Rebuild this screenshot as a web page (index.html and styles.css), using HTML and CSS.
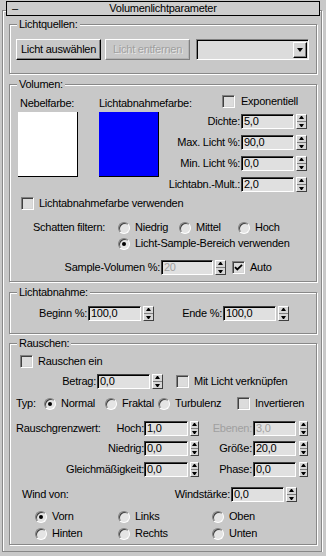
FILE: index.html
```html
<!DOCTYPE html>
<html>
<head>
<meta charset="utf-8">
<link rel="stylesheet" href="styles.css">
</head>
<body>
<div class="panel">
  <div class="title"><span class="minus">–</span><span class="title-text">Volumenlichtparameter</span><span></span></div>

  <div class="group g-quellen">
    <span class="legend">Lichtquellen:</span>
    <div class="btn-row">
      <div class="btn">Licht auswählen</div>
      <div class="btn disabled">Licht entfernen</div>
      <div class="combo"><div class="combo-btn"><span class="tri-down"></span></div></div>
    </div>
  </div>

  <div class="group g-vol">
    <span class="legend">Volumen:</span>
    <div class="vol-top">
      <div class="col1">
        <div class="cap">Nebelfarbe:</div>
        <div class="swatch white"></div>
      </div>
      <div class="col2">
        <div class="cap">Lichtabnahmefarbe:</div>
        <div class="swatch blue"></div>
      </div>
      <div class="col3">
        <div class="chk exp"><span class="cb"></span><span>Exponentiell</span></div>
        <div class="param"><span class="lbl">Dichte:</span><span class="fld">5,0</span><span class="spin"></span></div>
        <div class="param"><span class="lbl">Max. Licht %:</span><span class="fld">90,0</span><span class="spin"></span></div>
        <div class="param"><span class="lbl">Min. Licht %:</span><span class="fld">0,0</span><span class="spin"></span></div>
        <div class="param"><span class="lbl">Lichtabn.-Mult.:</span><span class="fld">2,0</span><span class="spin"></span></div>
      </div>
    </div>
    <div class="chk lfv"><span class="cb"></span><span>Lichtabnahmefarbe verwenden</span></div>
    <div class="radio-row rr1">
      <span class="rlabel">Schatten filtern:</span>
      <span class="ropt w61"><span class="rb"></span>Niedrig</span>
      <span class="ropt w59"><span class="rb"></span>Mittel</span>
      <span class="ropt"><span class="rb"></span>Hoch</span>
    </div>
    <div class="radio-row rr2">
      <span class="ropt"><span class="rb on"></span>Licht-Sample-Bereich verwenden</span>
    </div>
    <div class="frow sv-row">
      <span class="lbl w-sv">Sample-Volumen %:</span><span class="fld w52 dis">20</span><span class="spin"></span>
      <span class="chk auto"><span class="cb"><svg width="9" height="9" viewBox="0 0 9 9"><path d="M1 4.2 L3.3 6.5 L8 1.8" stroke="#000" stroke-width="1.8" fill="none"/></svg></span><span>Auto</span></span>
    </div>
  </div>

  <div class="group g-abn">
    <span class="legend">Lichtabnahme:</span>
    <div class="frow la-row">
      <span class="lbl w-beg">Beginn %:</span><span class="fld">100,0</span><span class="spin"></span>
      <span class="lbl w-end">Ende %:</span><span class="fld">100,0</span><span class="spin"></span>
    </div>
  </div>

  <div class="group g-rau">
    <span class="legend">Rauschen:</span>
    <div class="chk rein"><span class="cb"></span><span>Rauschen ein</span></div>
    <div class="frow bet-row">
      <span class="lbl w-bet">Betrag:</span><span class="fld">0,0</span><span class="spin"></span>
      <span class="chk mlv"><span class="cb"></span><span>Mit Licht verknüpfen</span></span>
    </div>
    <div class="radio-row typ-row">
      <span class="rlabel w-typ">Typ:</span>
      <span class="ropt w-norm"><span class="rb on"></span>Normal</span>
      <span class="ropt w-frak"><span class="rb"></span>Fraktal</span>
      <span class="ropt w-turb"><span class="rb"></span>Turbulenz</span>
      <span class="chk"><span class="cb"></span><span>Invertieren</span></span>
    </div>
    <div class="frow nz-row nz1">
      <span class="nz-left"><span>Rauschgrenzwert:</span><span>Hoch:</span></span>
      <span class="fld w44">1,0</span><span class="spin narrow"></span>
      <span class="lbl w-r dis">Ebenen:</span><span class="fld w43 dis">3,0</span><span class="spin narrow r"></span>
    </div>
    <div class="frow nz-row nz2">
      <span class="nz-left right"><span>Niedrig:</span></span>
      <span class="fld w44">0,0</span><span class="spin narrow"></span>
      <span class="lbl w-r">Größe:</span><span class="fld w43">20,0</span><span class="spin narrow r"></span>
    </div>
    <div class="frow nz-row nz3">
      <span class="nz-left right"><span>Gleichmäßigkeit:</span></span>
      <span class="fld w44">0,0</span><span class="spin narrow"></span>
      <span class="lbl w-r">Phase:</span><span class="fld w43">0,0</span><span class="spin narrow r"></span>
    </div>
    <div class="frow wind-row">
      <span class="wind-l">Wind von:</span>
      <span class="lbl w-ws">Windstärke:</span><span class="fld">0,0</span><span class="spin"></span>
    </div>
    <div class="radio-row wr1">
      <span class="ropt w-c1"><span class="rb on"></span>Vorn</span>
      <span class="ropt w-c2"><span class="rb"></span>Links</span>
      <span class="ropt"><span class="rb"></span>Oben</span>
    </div>
    <div class="radio-row wr2">
      <span class="ropt w-c1"><span class="rb"></span>Hinten</span>
      <span class="ropt w-c2"><span class="rb"></span>Rechts</span>
      <span class="ropt"><span class="rb"></span>Unten</span>
    </div>
  </div>
</div>
</body>
</html>
```
FILE: styles.css
```css
* { box-sizing: border-box; }

body {
  margin: 0;
  background: #c8c8c8;
  font-family: "Liberation Sans", Arial, sans-serif;
  font-size: 11px;
  line-height: 13px;
  letter-spacing: -0.25px;
  color: #000;
}

.panel {
  margin: 10px 0 0 2px;
  width: 320px;
  height: 542px;
  border: 1px solid #888;
  box-shadow: inset 1px 1px #fff, 1px 1px #fff;
}

.title {
  display: grid;
  grid-template-columns: 1fr auto 1fr;
  align-items: center;
  width: 314px;
  height: 15px;
  margin: -10px 0 0 3px;
  border: 1px solid #000;
  background: #cdcdcd;
}
.minus { padding-left: 5px; }

.group {
  position: relative;
  margin: 10px 0 0 6px;
  width: 308px;
  border: 1px solid #888;
  box-shadow: inset 1px 1px #fff, 1px 1px #fff;
}
.legend {
  position: absolute;
  top: -7px;
  left: 7px;
  padding: 0 2px;
  background: #c8c8c8;
  line-height: 13px;
}
.g-quellen { margin-top: 8px; height: 50px; }
.g-vol { height: 198px; }
.g-abn { height: 42px; }
.g-rau { margin-top: 9px; height: 202px; }

/* buttons */
.btn-row { display: flex; margin: 14px 0 0 6px; }
.btn {
  width: 85px;
  height: 21px;
  display: flex;
  align-items: center;
  justify-content: center;
  border: 1px solid;
  border-color: #fff #000 #000 #fff;
  box-shadow: inset -1px -1px #808080;
  margin-right: 4px;
}
.btn.disabled {
  color: #a0a0a0;
  text-shadow: 1px 1px 0 #e6e6e6;
  border-color: #fff #808080 #808080 #fff;
  box-shadow: inset -1px -1px #b4b4b4;
}
.combo {
  width: 113px;
  height: 21px;
  margin-left: 2px;
  display: flex;
  justify-content: flex-end;
  padding: 2px 1px 1px 2px;
  border: 1px solid;
  border-color: #808080 #fff #fff #808080;
  box-shadow: inset 1px 1px #000;
  background: #dcdcdc;
}
.combo-btn {
  width: 14px;
  display: flex;
  align-items: center;
  justify-content: center;
  border: 1px solid;
  border-color: #fff #000 #000 #fff;
  box-shadow: inset -1px -1px #808080;
  background: #d6d6d6;
}
.tri-down {
  width: 1px;
  height: 0;
  border-left: 3px solid transparent;
  border-right: 3px solid transparent;
  border-top: 4px solid #000;
}

/* volume top */
.vol-top { display: flex; }
.col1 { margin-left: 8px; width: 60px; }
.col2 { margin-left: 21px; width: 60px; white-space: nowrap; }
.col3 { flex: 1; padding-right: 9px; }
.cap { margin: 12px 0 0 2px; height: 13px; }
.col2 .cap { margin-left: 0; }
.swatch {
  margin-top: 2px;
  width: 60px;
  height: 65px;
  border-right: 1px solid #000;
  border-bottom: 1px solid #000;
}
.swatch.white { background: #fff; }
.swatch.blue { background: #0000ff; }

.chk { display: flex; align-items: center; height: 13px; white-space: nowrap; }
.cb {
  width: 13px;
  height: 13px;
  flex: none;
  margin-right: 5px;
  display: flex;
  align-items: center;
  justify-content: center;
  border: 1px solid;
  border-color: #808080 #fff #fff #808080;
  box-shadow: inset 1px 1px #404040, inset -1px -1px #d4d4d4;
  background: #dcdcdc;
}
.exp { margin: 10px 0 0 63px; }
.exp .cb { margin-right: 6px; }

.param {
  display: flex;
  align-items: center;
  justify-content: flex-end;
  height: 15px;
  margin-top: 6px;
}
.param .lbl { margin-right: 1px; white-space: nowrap; }

.fld {
  width: 53px;
  height: 15px;
  flex: none;
  padding-left: 2px;
  line-height: 13px;
  border: 1px solid;
  border-color: #404040 #fff #fff #404040;
  box-shadow: inset 1px 1px #000;
  background: #e0e0e0;
  white-space: nowrap;
  overflow: hidden;
}
.fld.dis { color: #a0a0a0; }
.w52 { width: 52px; }
.w44 { width: 44px; }
.w43 { width: 43px; }

.spin {
  position: relative;
  width: 11px;
  height: 15px;
  flex: none;
  margin-left: 2px;
  border: 1px solid;
  border-color: #fff #404040 #404040 #fff;
  background: linear-gradient(to bottom, #d6d6d6 0 6px, #808080 6px 7px, #d6d6d6 7px);
}
.spin::before,
.spin::after {
  content: "";
  position: absolute;
  left: 2px;
  width: 1px;
  height: 0;
  border-left: 2px solid transparent;
  border-right: 2px solid transparent;
}
.spin::before { top: 1px; border-bottom: 3px solid #000; }
.spin::after { top: 9px; border-top: 3px solid #000; }
.spin.narrow { width: 9px; }
.spin.narrow::before,
.spin.narrow::after { left: 1px; }
.spin.narrow.r { margin-left: 3px; }

.lbl { text-align: right; white-space: nowrap; flex: none; }
.lbl.dis { color: #a0a0a0; }

.lfv { margin: 5px 0 0 11px; }

.radio-row { display: flex; align-items: center; height: 13px; white-space: nowrap; }
.ropt { display: flex; align-items: center; flex: none; }
.rb {
  position: relative;
  width: 12px;
  height: 12px;
  flex: none;
  margin-right: 5px;
  border-radius: 50%;
  border: 1px solid;
  border-color: #808080 #fff #fff #808080;
  box-shadow: inset 1px 1px #404040;
  background: #e4e4e4;
}
.rb.on::after {
  content: "";
  position: absolute;
  left: 3px;
  top: 3px;
  width: 4px;
  height: 4px;
  border-radius: 50%;
  background: #000;
}
.rr1 { margin: 11px 0 0 23px; }
.rlabel { width: 85px; flex: none; }
.w61 { width: 61px; }
.w59 { width: 59px; }
.rr2 { margin: 3px 0 0 108px; }

.frow { display: flex; align-items: center; height: 15px; }
.frow .lbl { margin-right: 1px; }
.sv-row { margin-top: 10px; }
.w-sv { width: 150px; }
.auto { margin-left: 6px; }

.la-row { margin-top: 13px; }
.w-beg { width: 77px; }
.w-end { width: 68px; }

.rein { margin: 11px 0 0 10px; }
.bet-row { margin-top: 6px; }
.w-bet { width: 86px; }
.mlv { margin-left: 13px; }

.typ-row { margin: 8px 0 0 6px; }
.w-typ { width: 28px; }
.w-norm { width: 61px; }
.w-frak { width: 53px; }
.w-turb { width: 79px; }

.nz-row .fld { margin-left: 0; }
.nz-left {
  width: 134px;
  flex: none;
  display: flex;
  justify-content: space-between;
  padding-left: 6px;
  white-space: nowrap;
}
.nz-left.right { justify-content: flex-end; }
.nz1 { margin-top: 11px; }
.nz2 { margin-top: 5px; }
.nz3 { margin-top: 6px; }
.w-r { width: 53px; }

.wind-row { margin-top: 10px; }
.wind-l { margin-left: 12px; width: 100px; flex: none; }
.w-ws { width: 108px; }

.wr1 { margin: 8px 0 0 25px; }
.wr2 { margin: 4px 0 0 25px; }
.w-c1 { width: 83px; }
.w-c2 { width: 94px; }
```
